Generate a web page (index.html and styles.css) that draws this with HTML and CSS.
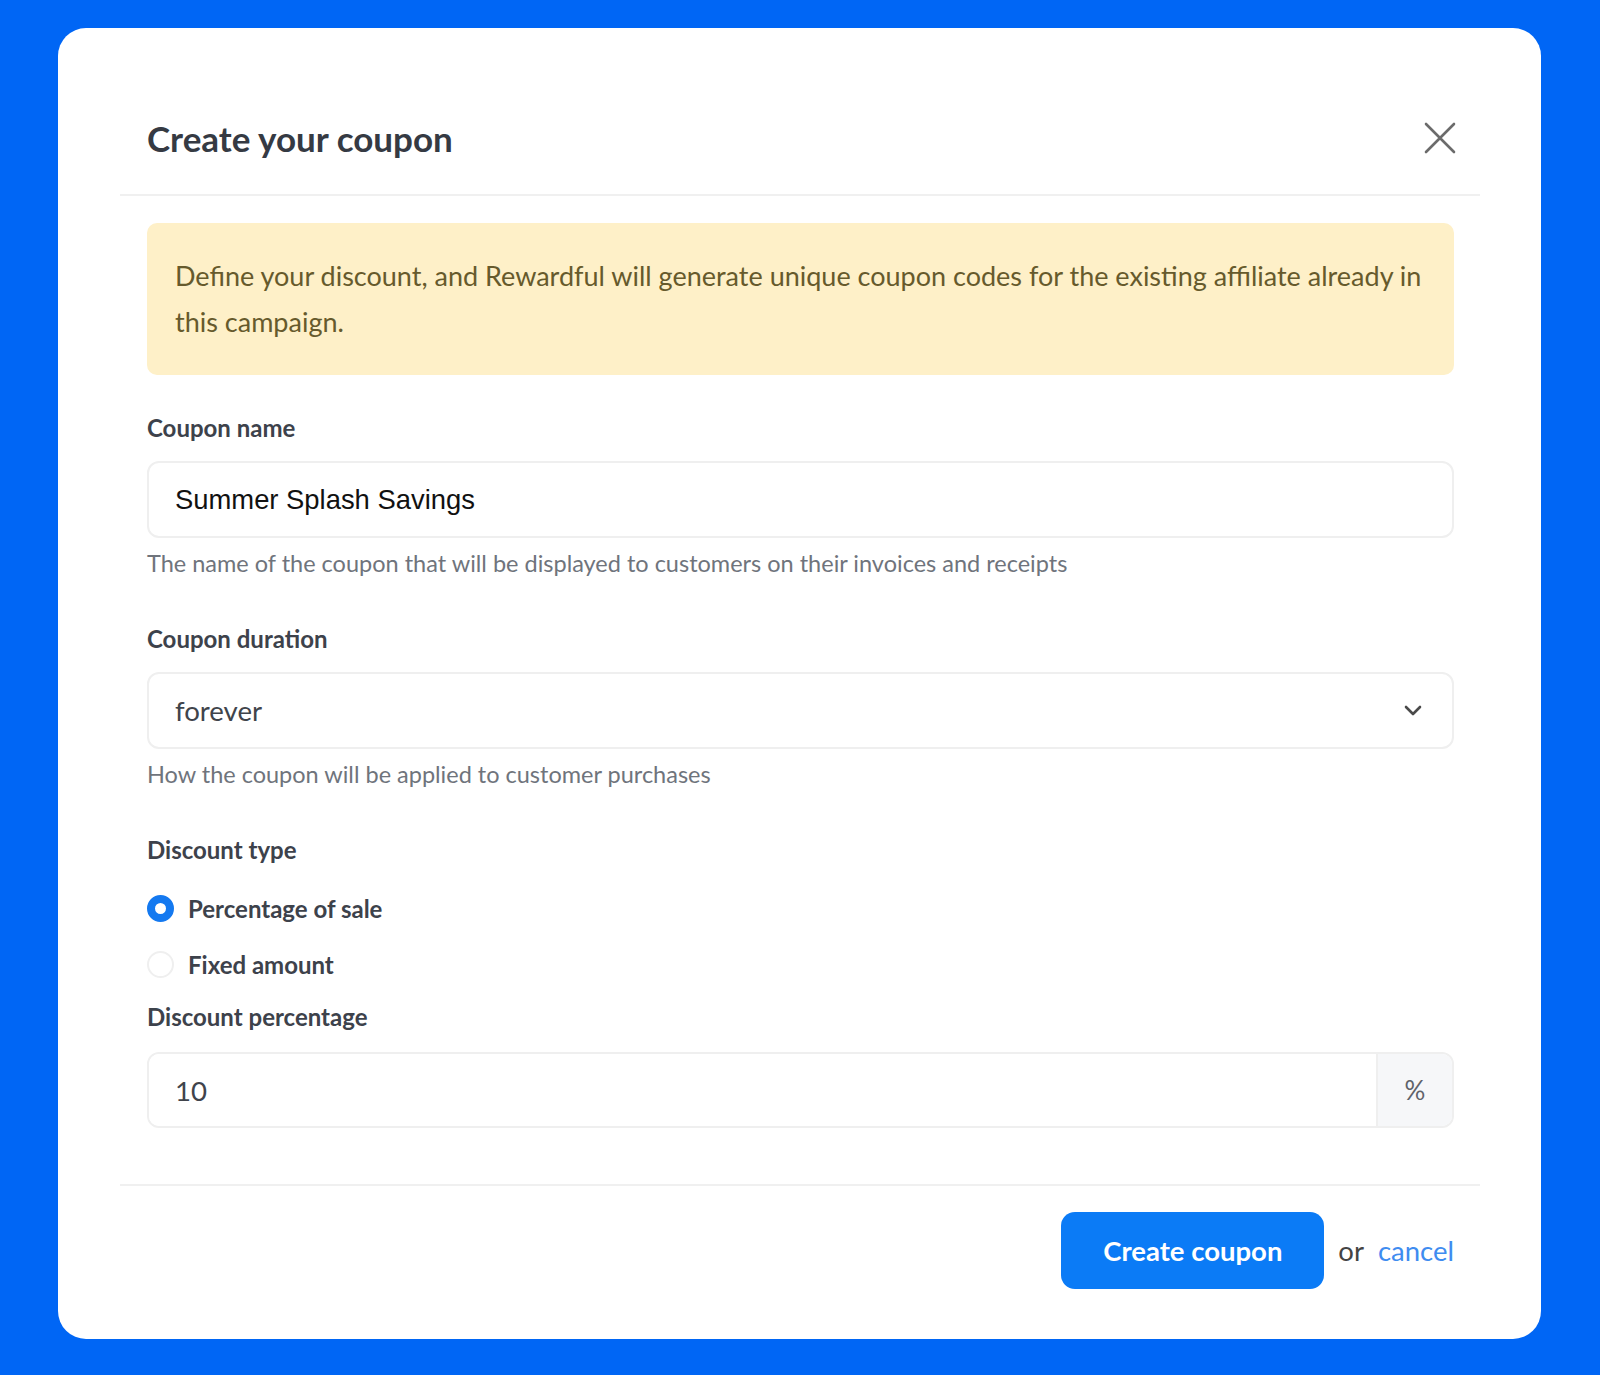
FILE: index.html
```html
<!DOCTYPE html>
<html lang="en">
<head>
<meta charset="utf-8">
<title>Create your coupon</title>
<link rel="stylesheet" href="styles.css">
</head>
<body>
<div class="card">
  <div class="header">
    <h1 class="title">Create your coupon</h1>
    <button class="close" aria-label="Close">
      <svg width="32" height="32" viewBox="0 0 32 32"><path d="M2 2 L30 30 M30 2 L2 30" stroke="#6b6b6b" stroke-width="2.6" fill="none" stroke-linecap="round"/></svg>
    </button>
  </div>
  <div class="body">
    <div class="alert">Define your discount, and Rewardful will generate unique coupon codes for the existing affiliate already in this campaign.</div>

    <div class="field">
      <div class="label">Coupon name</div>
      <div class="input"><span class="value-name">Summer Splash Savings</span></div>
      <div class="help">The name of the coupon that will be displayed to customers on their invoices and receipts</div>
    </div>

    <div class="field">
      <div class="label">Coupon duration</div>
      <div class="input select"><span class="value">forever</span>
        <svg class="chev" width="18" height="11" viewBox="0 0 18 11"><path d="M2 2 L9 9 L16 2" stroke="#4a4a4a" stroke-width="2.6" fill="none" stroke-linecap="round" stroke-linejoin="round"/></svg>
      </div>
      <div class="help">How the coupon will be applied to customer purchases</div>
    </div>

    <div class="field">
      <div class="label">Discount type</div>
      <div class="radios">
        <div class="radio-row"><span class="radio checked"></span><span class="radio-label">Percentage of sale</span></div>
        <div class="radio-row"><span class="radio"></span><span class="radio-label">Fixed amount</span></div>
      </div>
    </div>

    <div class="field pct">
      <div class="label">Discount percentage</div>
      <div class="input-group">
        <div class="input grow"><span class="value">10</span></div>
        <div class="addon">%</div>
      </div>
    </div>
  </div>
  <div class="footer">
    <button class="primary">Create coupon</button>
    <span class="or">or</span>
    <a class="cancel" href="#">cancel</a>
  </div>
</div>
</body>
</html>
```

FILE: styles.css
```css
* { box-sizing: border-box; }
html, body { margin: 0; padding: 0; }
body {
  background: #0066f5;
  padding: 28px 59px 36px 58px;
  font-family: Lato, "Noto Sans", sans-serif;
}
.card {
  background: #fff;
  border-radius: 28px;
  padding: 0 61px 50px 62px;
}
.header {
  display: flex;
  align-items: center;
  justify-content: space-between;
  padding: 90px 24px 36px 27px;
  border-bottom: 2px solid #f0f0f0;
}
.title {
  margin: 0;
  font-size: 35px;
  line-height: 40px;
  font-weight: 700;
  color: #353a43;
}
.close {
  background: none;
  border: 0;
  padding: 0;
  width: 32px;
  height: 32px;
  display: flex;
  cursor: pointer;
}
.body {
  padding: 27px 26px 56px 27px;
  border-bottom: 2px solid #f0f0f0;
}
.alert {
  background: #fef0c8;
  border-radius: 10px;
  padding: 30px 24px 30px 28px;
  font-size: 27px;
  line-height: 46px;
  color: #665a2c;
}
.field { margin-top: 38px; }
.field + .field { margin-top: 46px; }
.field.pct { margin-top: 10px; }
.label {
  font-size: 24px;
  line-height: 30px;
  font-weight: 700;
  color: #3d424b;
}
.input {
  margin-top: 18px;
  height: 77px;
  border: 2px solid #efefef;
  border-radius: 12px;
  display: flex;
  align-items: center;
  padding: 0 26px;
  background: #fff;
}
.value-name {
  font-family: "Liberation Sans", Arial, sans-serif;
  font-size: 27.4px;
  color: #111;
}
.value {
  font-size: 27.6px;
  color: #40444b;
}
.select { justify-content: space-between; padding-right: 30px; }
.help {
  margin-top: 10px;
  font-size: 23.5px;
  line-height: 30px;
  color: #6f747c;
}
.radios { margin-top: 15px; }
.radio-row {
  height: 56px;
  display: flex;
  align-items: center;
}
.radio {
  width: 27px;
  height: 27px;
  border-radius: 50%;
  border: 2px solid #efefef;
  margin-right: 14px;
  flex: none;
}
.radio.checked {
  border: 8px solid #1479f0;
}
.radio-label {
  font-size: 24px;
  font-weight: 700;
  color: #3d424b;
}
.input-group {
  margin-top: 20px;
  display: flex;
  height: 76px;
  border: 2px solid #efefef;
  border-radius: 12px;
  overflow: hidden;
}
.input-group .input {
  margin: 0;
  border: 0;
  border-radius: 0;
  height: auto;
}
.grow { flex: 1; }
.addon {
  width: 76px;
  background: #f6f7f9;
  border-left: 2px solid #efefef;
  display: flex;
  align-items: center;
  justify-content: center;
  font-size: 26px;
  color: #5f636a;
}
.footer {
  display: flex;
  justify-content: flex-end;
  align-items: center;
  padding: 26px 26px 0 0;
}
.primary {
  width: 263px;
  height: 77px;
  background: #0b7bf6;
  border: 0;
  border-radius: 14px;
  color: #fff;
  font-family: Lato, "Noto Sans", sans-serif;
  font-size: 27.5px;
  font-weight: 700;
  cursor: pointer;
}
.or {
  margin-left: 14px;
  font-size: 27.5px;
  color: #444;
}
.cancel {
  margin-left: 14px;
  font-size: 27.5px;
  color: #3f8cf0;
  text-decoration: none;
}
```
